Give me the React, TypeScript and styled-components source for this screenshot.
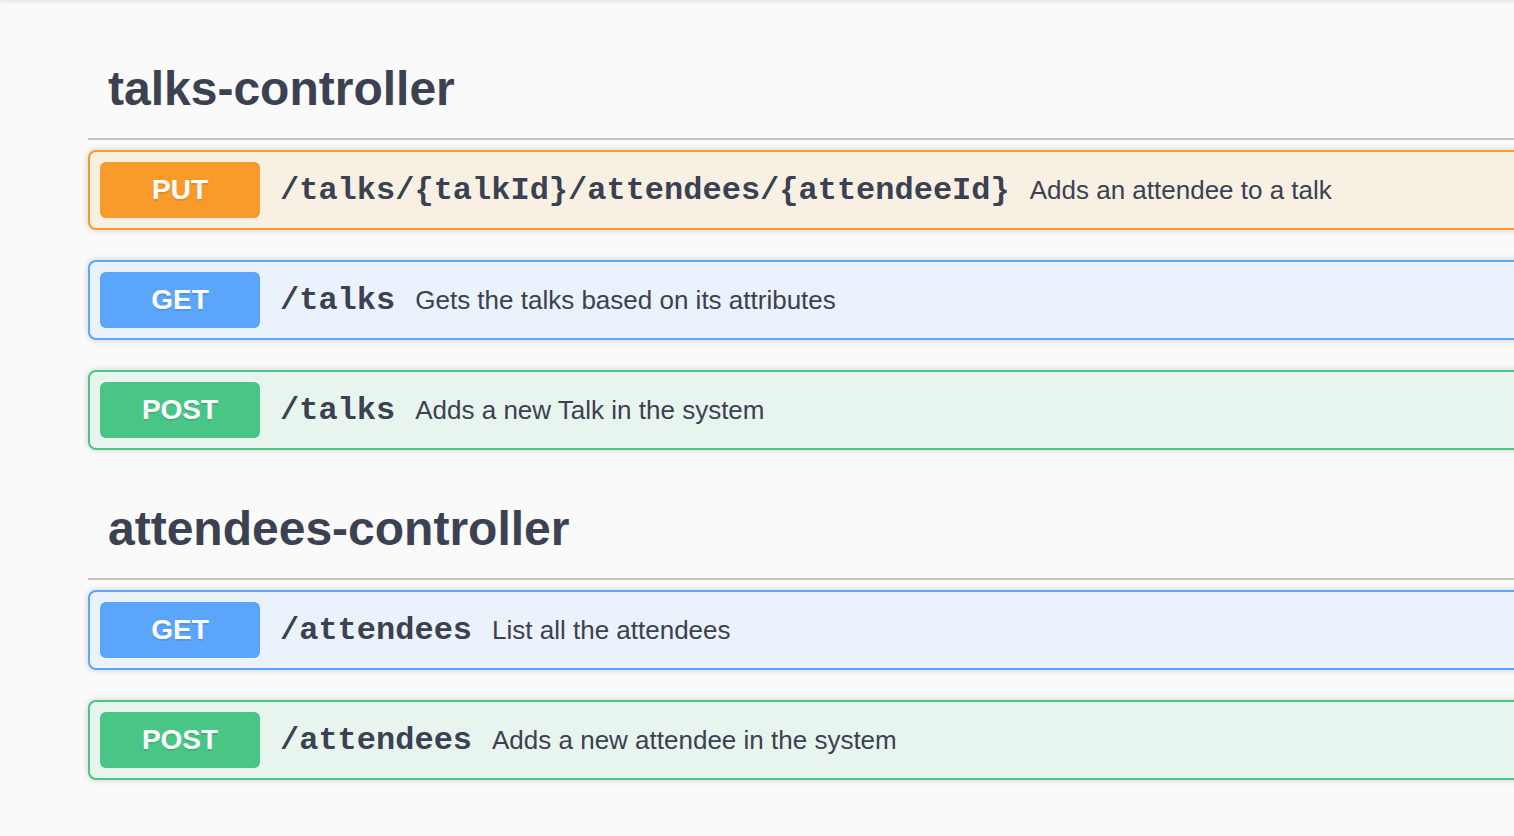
import React from "react";
import styled, { createGlobalStyle } from "styled-components";

const GlobalStyle = createGlobalStyle`
  html, body {
    margin: 0;
    padding: 0;
    background: #fafafa;
    overflow: hidden;
  }
  body {
    font-family: "Liberation Sans", Arial, sans-serif;
    color: #3b4151;
  }
`;

type Method = "PUT" | "GET" | "POST";

const palette: Record<Method, { main: string; bg: string }> = {
  PUT: { main: "#f99b2b", bg: "#f9f0e4" },
  GET: { main: "#5ba5fd", bg: "#eaf2fb" },
  POST: { main: "#49c586", bg: "#e8f5ee" },
};

const TopEdge = styled.div`
  height: 0;
  box-shadow: 0 0 4px 1px rgba(0, 0, 0, 0.18);
`;

const Page = styled.div`
  padding: 40px 0 0 88px;
  width: 1500px;
`;

const Section = styled.section`
  display: flex;
  flex-direction: column;
`;

const TagHeading = styled.h4`
  margin: 0 0 10px;
  padding: 20px 40px 20px 20px;
  height: 58px;
  display: flex;
  align-items: center;
  border-bottom: 2px solid rgba(59, 65, 81, 0.3);
  font-family: "Liberation Sans", Arial, sans-serif;
  font-size: 48px;
  font-weight: 700;
  line-height: 58px;
  color: #3b4151;
`;

const Block = styled.div<{ $method: Method }>`
  display: flex;
  align-items: center;
  padding: 10px;
  margin-bottom: 30px;
  border: 2px solid ${(p) => palette[p.$method].main};
  background: ${(p) => palette[p.$method].bg};
  border-radius: 8px;
  box-shadow: 0 0 6px rgba(0, 0, 0, 0.19);
`;

const Badge = styled.span<{ $method: Method }>`
  flex: none;
  width: 160px;
  height: 56px;
  display: flex;
  align-items: center;
  justify-content: center;
  border-radius: 6px;
  background: ${(p) => palette[p.$method].main};
  color: #fff;
  font-family: "Liberation Sans", Arial, sans-serif;
  font-size: 28px;
  font-weight: 700;
  text-shadow: 0 2px 0 rgba(0, 0, 0, 0.1);
`;

const Path = styled.span`
  padding: 0 20px;
  font-family: "Liberation Mono", "Courier New", monospace;
  font-size: 32px;
  font-weight: 700;
  color: #3b4151;
  white-space: nowrap;
`;

const Description = styled.span`
  font-family: "Liberation Sans", Arial, sans-serif;
  font-size: 26px;
  color: #3b4151;
  white-space: nowrap;
`;

type Op = { method: Method; path: string; summary: string };

const sections: { tag: string; ops: Op[] }[] = [
  {
    tag: "talks-controller",
    ops: [
      {
        method: "PUT",
        path: "/talks/{talkId}/attendees/{attendeeId}",
        summary: "Adds an attendee to a talk",
      },
      { method: "GET", path: "/talks", summary: "Gets the talks based on its attributes" },
      { method: "POST", path: "/talks", summary: "Adds a new Talk in the system" },
    ],
  },
  {
    tag: "attendees-controller",
    ops: [
      { method: "GET", path: "/attendees", summary: "List all the attendees" },
      { method: "POST", path: "/attendees", summary: "Adds a new attendee in the system" },
    ],
  },
];

export default function App() {
  return (
    <>
      <GlobalStyle />
      <TopEdge />
      <Page>
        {sections.map((s) => (
          <Section key={s.tag}>
            <TagHeading>{s.tag}</TagHeading>
            {s.ops.map((op) => (
              <Block key={op.method + op.path} $method={op.method}>
                <Badge $method={op.method}>{op.method}</Badge>
                <Path>{op.path}</Path>
                <Description>{op.summary}</Description>
              </Block>
            ))}
          </Section>
        ))}
      </Page>
    </>
  );
}
